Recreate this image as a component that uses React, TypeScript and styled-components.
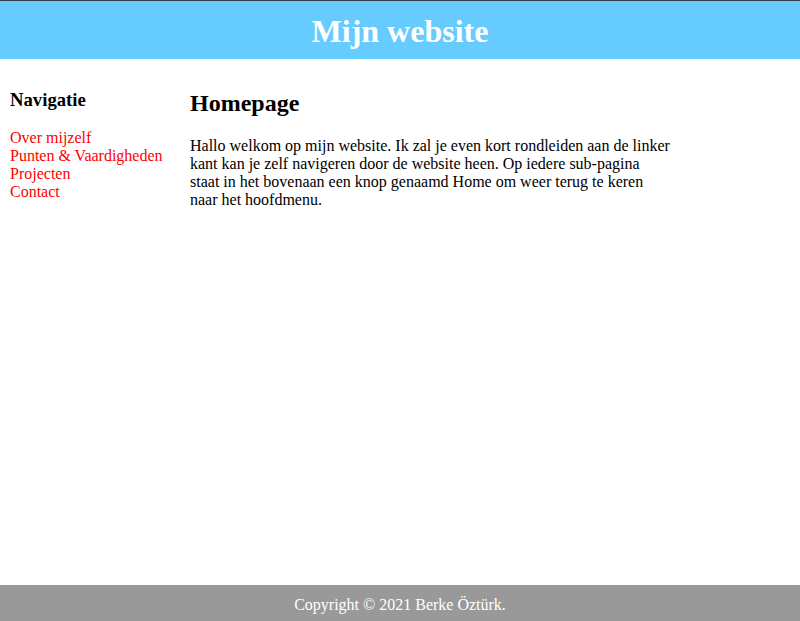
import styled, { createGlobalStyle } from 'styled-components'

const GlobalStyle = createGlobalStyle`
  html, body {
    margin: 0;
    padding: 0;
    background: #ffffff;
    font-family: "Liberation Serif", "Times New Roman", serif;
    font-size: 16px;
  }
`

const links = ['Over mijzelf', 'Punten & Vaardigheden', 'Projecten', 'Contact']

const App = () => {
  return (
    <StyledPage>
      <GlobalStyle />
      <StyledHeader>
        <h1>Mijn website</h1>
      </StyledHeader>
      <StyledBody>
        <StyledNav>
          <h3>Navigatie</h3>
          <StyledLinkList>
            {links.map(link => (
              <li key={link}>
                <StyledLink href="#">{link}</StyledLink>
              </li>
            ))}
          </StyledLinkList>
        </StyledNav>
        <StyledMain>
          <h2>Homepage</h2>
          <p>
            Hallo welkom op mijn website. Ik zal je even kort rondleiden aan de linker kant kan je zelf
            navigeren door de website heen. Op iedere sub-pagina staat in het bovenaan een knop genaamd
            Home om weer terug te keren naar het hoofdmenu.
          </p>
        </StyledMain>
      </StyledBody>
      <StyledFooter>Copyright © 2021 Berke Öztürk.</StyledFooter>
    </StyledPage>
  )
}

const StyledPage = styled.div`
  display: flex;
  flex-direction: column;
  min-height: 100vh;
`

const StyledHeader = styled.header`
  background-color: #66ccff;
  border-top: 1px solid #333a40;
  padding: 12px 10px 9px;
  text-align: center;
  h1 {
    margin: 0;
    font-size: 32px;
    color: #ffffff;
  }
`

const StyledBody = styled.div`
  flex: 1;
  display: flex;
  align-items: flex-start;
  padding-top: 1px;
`

const StyledNav = styled.nav`
  width: 160px;
  padding: 10px;
  h3 {
    font-size: 1.17em;
    margin: 18.72px 0;
  }
`

const StyledLinkList = styled.ul`
  list-style-type: none;
  margin: 16px 0;
  padding: 0;
`

const StyledLink = styled.a`
  color: #ff0000;
  text-decoration: none;
`

const StyledMain = styled.main`
  width: 480px;
  padding: 10px;
  h2 {
    font-size: 24px;
    margin: 19.92px 0;
  }
  p {
    margin: 16px 0;
  }
`

const StyledFooter = styled.footer`
  background-color: #999999;
  color: #ffffff;
  text-align: center;
  padding: 11px 9px 7px;
`

export default App
